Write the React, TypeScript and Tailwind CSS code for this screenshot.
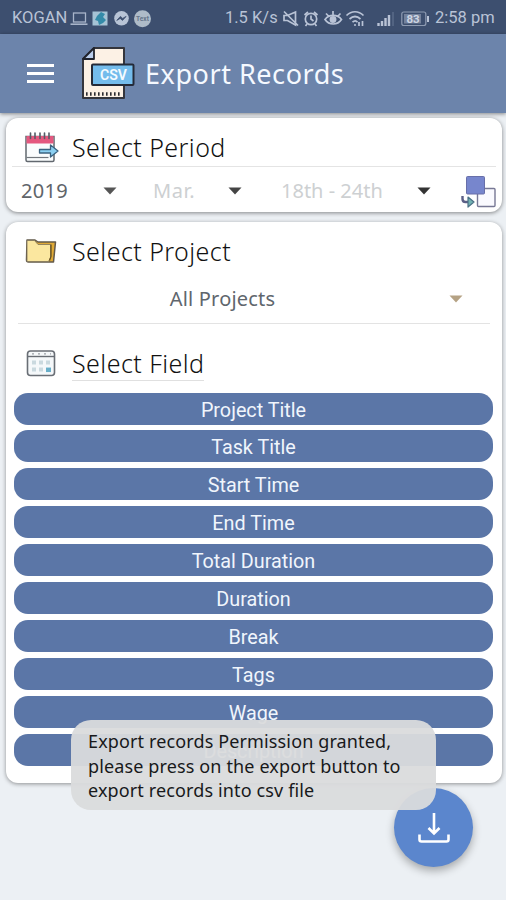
import type { ReactNode } from "react";

const fields = [
  "Project Title",
  "Task Title",
  "Start Time",
  "End Time",
  "Total Duration",
  "Duration",
  "Break",
  "Tags",
  "Wage",
  "Description",
];

const StatusBar = () => (
  <div className="flex h-[34px] items-center bg-[#3d4f6f] pt-[3px] pl-3 font-['Roboto',sans-serif] text-[16.5px] text-[#b9c3d6]">
    <span className="w-[58px] whitespace-nowrap text-[16.5px]">KOGAN</span>
    <svg width="84" height="18" viewBox="70 9 84 18" className="shrink-0">
      <rect x="73.5" y="12" width="12" height="9" fill="none" stroke="#a9b5ca" strokeWidth="1.3" />
      <path d="M70.5 23.2h17" stroke="#a9b5ca" strokeWidth="1.6" />
      <rect x="92.5" y="10.5" width="15" height="14" fill="#a5c3d5" />
      <path d="M101 11l-4 4-2 4 3 1 1 4 4-2 3-3-3-3 2-3z" fill="#348ba9" />
      <circle cx="121.5" cy="17.3" r="7.3" fill="#b8c4d6" />
      <path d="M116.8 19.4l3.6-4 2.3 2 3.4-2-3.6 4-2.3-2z" fill="#3d4f6f" stroke="#3d4f6f" strokeWidth=".8" />
      <circle cx="142.5" cy="17.8" r="8.5" fill="#aebbc8" />
      <text x="142.5" y="20" textAnchor="middle" fontSize="6.5" fontWeight="700" fill="#65758a">
        Text
      </text>
    </svg>
    <span className="ml-[71px] w-[57px] whitespace-nowrap">1.5 K/s</span>
    <svg
      width="152"
      height="20"
      viewBox="282 8 152 20"
      fill="none"
      stroke="#b9c3d6"
      strokeWidth="1.7"
      className="shrink-0"
    >
      <path d="M284 14.5v5h3.5l8 4.5V11l-8 3.5zM284 10.5l14 14" />
      <circle cx="311" cy="18" r="5.7" />
      <path d="M311 14.5V18l2.5 2M304.5 14l3.5-3M317.5 14l-3.5-3M307 23l-1.5 2M315 23l1.5 2" />
      <path d="M325 18.5c4-5.5 12.5-5.5 16.5 0-4 6-12.5 6-16.5 0zM326 12.5l2.5 2.5M333 10v3.5M340.5 12.5l-2.5 2.5" />
      <circle cx="333" cy="18.5" r="2.6" fill="#b9c3d6" />
      <path d="M346.5 14.5c5-5 12-5 17 0M349.5 18c3.5-3.2 7.5-3.2 11 0M352.5 21.2c2-1.8 3.5-1.8 5 0" />
      <path d="M354 24h2M359 21v4M362.5 20v5" />
      <path d="M378.5 22v3M382 20v5M385.5 17v8M389 14v11" strokeWidth="2.4" />
      <path d="M393 11v14" strokeWidth="1.2" stroke="#62728f" />
      <rect x="401.8" y="11" width="24" height="13.5" rx="2" strokeWidth="1.2" stroke="#8e9bb2" />
      <rect x="404" y="13" width="17" height="9.5" fill="#74829c" stroke="none" />
      <path d="M428 15v6" strokeWidth="2" />
      <text x="413" y="22" textAnchor="middle" fontSize="11.5" fontWeight="700" fill="#ced6e4" stroke="none">
        83
      </text>
    </svg>
    <span className="ml-px whitespace-nowrap">2:58 pm</span>
  </div>
);

const CsvIcon = () => (
  <svg width="54" height="54" viewBox="82 46 54 54">
    <path
      d="M95 48h30v50H84V59z"
      fill="#fcf1e5"
      stroke="#34353c"
      strokeWidth="2"
      strokeLinejoin="round"
    />
    <path d="M95 48v11H84z" fill="#b9cdec" stroke="#20232c" strokeWidth="1.8" strokeLinejoin="round" />
    <path d="M87 94h36" stroke="#2b2b2f" strokeWidth="3.4" strokeDasharray="1.6 2.4" />
    <rect x="93" y="64.5" width="41.5" height="20.5" rx="1" fill="#74bcec" stroke="#242a38" strokeWidth="2" />
    <text
      x="114.5"
      y="80.2"
      textAnchor="middle"
      textLength="27"
      lengthAdjust="spacingAndGlyphs"
      fontFamily="Roboto, sans-serif"
      fontSize="15"
      fontWeight="600"
      fill="#f4fbff"
    >
      CSV
    </text>
  </svg>
);

const CalendarExportIcon = () => (
  <svg width="36" height="32" viewBox="24 130 36 32">
    <path d="M26 134.5h28V158q0 1.5-1.5 1.5h-25q-1.5 0-1.5-1.5z" fill="#fafcfd" stroke="#62686f" strokeWidth="1.5" />
    <path d="M26.5 134h27v7.5h-27z" fill="#e4587f" />
    <path d="M26.5 155.5h22" stroke="#72777d" strokeWidth="1.2" />
    <path d="M30.5 131v5.5M35 131v5.5M40 131v5.5M44.5 131v5.5M49 131v5.5" stroke="#555b66" strokeWidth="1.6" strokeLinecap="round" />
    <path
      d="M39.5 147.5h11V143l7.5 6-7.5 6v-4h-11z"
      fill="#8bd0f2"
      stroke="#3c6380"
      strokeWidth="1.3"
      strokeLinejoin="round"
    />
  </svg>
);

const FolderIcon = () => (
  <svg width="34" height="26" viewBox="24 237 34 26">
    <path
      d="M27 239h8l3 2h17.5L53.5 261H28.5q-2 0-2-2z"
      fill="#e0aa36"
      stroke="#62594a"
      strokeWidth="1.5"
      strokeLinejoin="round"
    />
    <path d="M27 239.5h7.5l3.5 4h12.5v13l-2 4H27z" fill="#fbe79f" stroke="#7d735a" strokeWidth=".8" />
    <path d="M51 243.5v12l-1.5 4" fill="none" stroke="#665121" strokeWidth="1.3" />
  </svg>
);

const FieldIcon = () => (
  <svg width="30" height="28" viewBox="26 349 30 28" className="ml-0.5">
    <rect x="27.5" y="351" width="27" height="24.5" rx="3" fill="#f5f8fa" stroke="#696e75" strokeWidth="1.6" />
    <path d="M28 356.5h26" stroke="#696e75" strokeWidth="1.4" />
    <path d="M32 353.8h2M38 353.8h2M44 353.8h2M50 353.8h1" stroke="#9a9fa5" strokeWidth="1.2" />
    <path d="M32 362.5h4M39 362.5h4M46 362.5h4M32 369.5h4M39 369.5h4" stroke="#cad9df" strokeWidth="4" />
    <path d="M46 369.8h5" stroke="#69afc9" strokeWidth="4.5" />
  </svg>
);

const SwapIcon = () => (
  <svg width="36" height="34" viewBox="460 174 36 34">
    <rect x="477.5" y="187.5" width="17.5" height="18" rx="1" fill="#fafaff" stroke="#777895" strokeWidth="1.4" />
    <rect x="466.5" y="175.5" width="18" height="17.5" rx="1" fill="#7786cd" stroke="#686fa9" strokeWidth="1" />
    <path d="M462.5 195v3q0 3 3 3h3" fill="none" stroke="#5b5f86" strokeWidth="2.4" />
    <path d="M468 196l6 5-6 5z" fill="#73b2b2" stroke="#4b7186" strokeWidth="1.2" strokeLinejoin="round" />
  </svg>
);

const Caret = ({ color }: { color: string }) => (
  <svg width="14" height="8" viewBox="0 0 14 8" className="shrink-0">
    <path d="M.5.5h13L7 7.5z" fill={color} />
  </svg>
);

const SectionTitle = ({ icon, children }: { icon: ReactNode; children: ReactNode }) => (
  <div className="flex h-9 items-center pl-[18px]">
    <div className="w-12 shrink-0">{icon}</div>
    {children}
  </div>
);

const App = () => (
  <div className="relative h-[900px] w-[506px] overflow-hidden bg-[#ecf0f4] font-['Noto_Sans','Open_Sans',sans-serif]">
    <StatusBar />
    <header className="flex h-[79px] items-center bg-[#6c84ab] pl-[27px] shadow-[0_1px_4px_rgba(0,0,0,0.45)]">
      <div className="flex w-[27px] flex-col gap-[5px]">
        <span className="h-[3px] bg-white" />
        <span className="h-[3px] bg-white" />
        <span className="h-[3px] bg-white" />
      </div>
      <div className="-mt-px ml-[27px]">
        <CsvIcon />
      </div>
      <h1 className="mt-0.5 ml-[10px] text-[27px] tracking-[0.55px] whitespace-nowrap text-[#f5f9ff]">
        Export Records
      </h1>
    </header>

    <main className="flex flex-col gap-2.5 pt-[5px] pr-1 pl-1.5">
      <section className="h-[94px] rounded-xl bg-white pt-3 shadow-[0_1px_4px_rgba(0,0,0,0.45)]">
        <SectionTitle icon={<CalendarExportIcon />}>
          <h2 className="text-[25px] font-light tracking-[0.45px] whitespace-nowrap text-[#111]">Select Period</h2>
        </SectionTitle>
        <div className="mx-1.5 h-px bg-[#e4e4e4]" />
        <div className="flex h-[47px] items-center pl-[15px] text-[20px] whitespace-nowrap">
          <span className="w-[82px] tracking-[0.3px] text-[#606469]">2019</span>
          <Caret color="#555" />
          <span className="ml-[36px] w-[75px] tracking-[0.6px] text-[#cdd0d2]">Mar.</span>
          <Caret color="#444" />
          <span className="ml-[39px] w-[136px] text-[#cdd0d2]">18th - 24th</span>
          <Caret color="#333" />
          <div className="ml-[29px] pt-0.5">
            <SwapIcon />
          </div>
        </div>
      </section>

      <section className="h-[561px] rounded-xl bg-white pt-[11px] shadow-[0_1px_4px_rgba(0,0,0,0.4)]">
        <SectionTitle icon={<FolderIcon />}>
          <h2 className="pt-0.5 text-[25px] font-light tracking-[0.45px] whitespace-nowrap text-[#111]">
            Select Project
          </h2>
        </SectionTitle>
        <div className="mr-3 ml-3 flex h-[55px] items-center border-b border-[#e3e3e3] pt-1.5">
          <span className="flex-1 pr-[22px] text-center text-[20px] tracking-[0.2px] text-[#60666d]">
            All Projects
          </span>
          <Caret color="#b5a284" />
          <span className="w-[27px]" />
        </div>
        <div className="mt-[21px]">
          <SectionTitle icon={<FieldIcon />}>
            <h2 className="border-b border-[#e0e0e0] text-[25px] leading-[34px] font-light tracking-[0.45px] whitespace-nowrap text-[#111]">
              Select Field
            </h2>
          </SectionTitle>
        </div>
        <div className="mt-[11.5px] flex flex-col gap-[5.9px] pr-[9px] pl-2">
          {fields.map((field) => (
            <button
              key={field}
              className="h-8 rounded-[14px] bg-[#5b76a7] pt-[3px] text-center font-['Roboto',sans-serif] text-[19.8px] leading-[29px] text-[#f0f5fc]"
            >
              {field}
            </button>
          ))}
        </div>
      </section>
    </main>

    <button className="absolute top-[788px] left-[394px] flex h-[79px] w-[79px] items-center justify-center rounded-full bg-[#5b86cd] shadow-[0_4px_8px_rgba(0,0,0,0.3)]">
      <svg width="32" height="32" viewBox="417 811 32 32" fill="none" stroke="#fff" strokeWidth="2.6">
        <path d="M433 812v20M427.5 827l5.5 5.5 5.5-5.5" />
        <path d="M418.5 833.5v5q0 2 2 2h25q2 0 2-2v-5" />
      </svg>
    </button>

    <div className="absolute top-[720px] left-[71px] h-[90px] w-[365px] rounded-[20px] bg-[#dadbdc]/95 pt-[9px] pl-[17px] text-[18px] leading-[24.5px] tracking-[0.13px] whitespace-pre text-[#18191b]">
      {"Export records Permission granted,\nplease press on the export button to\nexport records into csv file"}
    </div>
  </div>
);

export default App;
